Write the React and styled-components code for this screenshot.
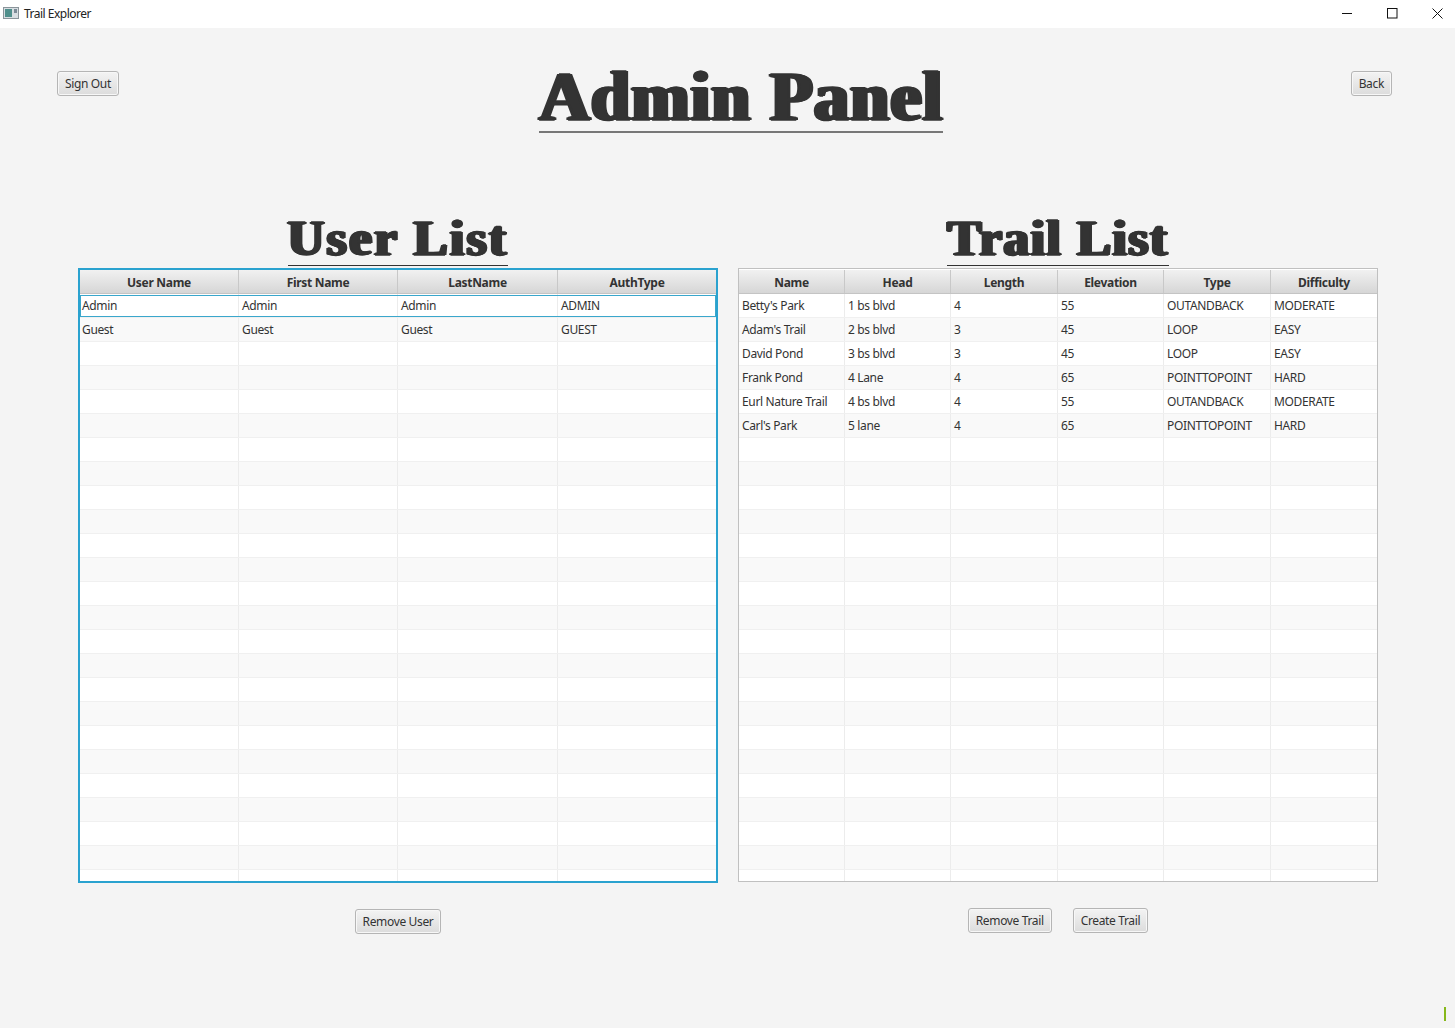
import React from "react";
import styled, { createGlobalStyle } from "styled-components";

const GlobalStyle = createGlobalStyle`
  html, body {
    margin: 0;
    padding: 0;
    background: #f4f4f4;
  }
  * {
    box-sizing: border-box;
  }
`;

const Window = styled.div`
  width: 1455px;
  height: 1028px;
  position: relative;
  overflow: hidden;
  background: #f4f4f4;
  font-family: "Noto Sans", "Open Sans", sans-serif;
  font-size: 12px;
  color: #333;
`;

const TitleBar = styled.div`
  height: 28px;
  background: #fff;
  display: flex;
  align-items: center;
  padding-left: 3px;
  color: #222;
`;

const AppName = styled.span`
  margin: -2px 0 0 5px;
  font-size: 12px;
  letter-spacing: -0.5px;
`;

const WindowButtons = styled.div`
  margin: -2px -5px 0 auto;
  display: flex;
`;

const WindowButton = styled.div`
  width: 45px;
  height: 28px;
  display: flex;
  align-items: center;
  justify-content: center;
`;

const Header = styled.div`
  display: flex;
  justify-content: space-between;
  align-items: flex-start;
  padding: 43px 63px 0 57px;
  height: 130px;
`;

const Button = styled.button`
  height: 25px;
  padding: 0 7px;
  border: 1px solid #b5b5b5;
  border-radius: 3px;
  background: linear-gradient(#f3f3f3, #dcdcdc);
  box-shadow: inset 0 0 0 1px #f7f7f7;
  font: inherit;
  font-size: 12px;
  letter-spacing: -0.35px;
  color: #333;
`;

const PageTitle = styled.h1`
  margin: -7px 0 0 13px;
  height: 69px;
  font-family: "Liberation Serif", serif;
  font-weight: 700;
  font-size: 70px;
  line-height: 66px;
  letter-spacing: 1.2px;
  color: #333;
  -webkit-text-stroke: 1.6px #333;
  text-shadow: 2.5px 0 0 #333, -2.5px 0 0 #333, 1.2px 0 0 #333, -1.2px 0 0 #333;
  border-bottom: 2px solid #777;
  white-space: nowrap;
`;

const Lists = styled.div`
  display: grid;
  grid-template-columns: 640px 640px;
  column-gap: 20px;
  padding: 54px 0 0 78px;
  align-items: start;
`;

const ListPanel = styled.section`
  display: flex;
  flex-direction: column;
  align-items: center;
`;

const ListTitle = styled.h2`
  margin: 0 0 2px;
  height: 54px;
  font-family: "Liberation Serif", serif;
  font-weight: 700;
  font-size: 51px;
  line-height: 53px;
  letter-spacing: ${(p) => p.$spacing}px;
  color: #333;
  -webkit-text-stroke: 1.3px #333;
  text-shadow: 2px 0 0 #333, -2px 0 0 #333, 1px 0 0 #333, -1px 0 0 #333;
  border-bottom: 1px solid #333;
  white-space: nowrap;
`;

const TableBox = styled.div`
  width: 640px;
  height: ${(p) => (p.$focused ? 615 : 614)}px;
  overflow: hidden;
  background: #fff;
  border: ${(p) => (p.$focused ? "2px solid #2aa2cf" : "1px solid #c0c0c0")};
  padding-top: ${(p) => (p.$focused ? 0 : 1)}px;
`;

const HeaderRow = styled.div`
  display: grid;
  grid-template-columns: ${(p) => p.$columns};
  height: 24px;
  background: linear-gradient(#f1f1f1, #d6d6d6);
  border-bottom: 1px solid #c4c4c4;
`;

const HeaderCell = styled.div`
  display: flex;
  align-items: center;
  justify-content: center;
  padding-top: 2px;
  font-weight: 700;
  letter-spacing: -0.3px;
  color: #333;
  border-right: 1px solid #c8c8c8;
  &:last-child {
    border-right: 0;
  }
`;

const Row = styled.div`
  display: grid;
  grid-template-columns: ${(p) => p.$columns};
  height: 24px;
  position: relative;
  background: ${(p) => (p.$odd ? "#f9f9f9" : "#fff")};
  border-bottom: 1px solid #f0f0f0;
`;

const Selection = styled.div`
  position: absolute;
  inset: 1px 0 0 0;
  border: 1px solid #3aa7cc;
  pointer-events: none;
`;

const Cell = styled.div`
  display: flex;
  align-items: center;
  padding-left: ${(p) => (p.$tight ? 2 : 3)}px;
  letter-spacing: -0.35px;
  color: #333;
  white-space: nowrap;
  border-right: 1px solid #ececec;
  &:last-child {
    border-right: 0;
  }
`;

const Actions = styled.div`
  display: flex;
  gap: 21px;
  margin-top: 26px;
`;

const StatusMark = styled.div`
  position: absolute;
  left: 1444px;
  top: 1007px;
  width: 2px;
  height: 14px;
  background: #86b81a;
`;

const userColumns = "159px 159px 160px 1fr";
const trailColumns = "106px 106px 107px 106px 107px 1fr";
const rowCount = 26;

const users = [
  ["Admin", "Admin", "Admin", "ADMIN"],
  ["Guest", "Guest", "Guest", "GUEST"],
];

const trails = [
  ["Betty's Park", "1 bs blvd", "4", "55", "OUTANDBACK", "MODERATE"],
  ["Adam's Trail", "2 bs blvd", "3", "45", "LOOP", "EASY"],
  ["David Pond", "3 bs blvd", "3", "45", "LOOP", "EASY"],
  ["Frank Pond", "4 Lane", "4", "65", "POINTTOPOINT", "HARD"],
  ["Eurl Nature Trail", "4 bs blvd", "4", "55", "OUTANDBACK", "MODERATE"],
  ["Carl's Park", "5 lane", "4", "65", "POINTTOPOINT", "HARD"],
];

const DataTable = ({ headers, rows, columns, focused }) => (
  <TableBox $focused={focused}>
    <HeaderRow $columns={columns}>
      {headers.map((h) => (
        <HeaderCell key={h}>{h}</HeaderCell>
      ))}
    </HeaderRow>
    {Array.from({ length: rowCount }).map((_, i) => (
      <Row key={i} $columns={columns} $odd={i % 2 === 1}>
        {headers.map((h, j) => (
          <Cell key={h} $tight={focused && j === 0}>
            {rows[i] ? rows[i][j] : ""}
          </Cell>
        ))}
        {focused && i === 0 && <Selection />}
      </Row>
    ))}
  </TableBox>
);

const AppIcon = () => (
  <svg width="16" height="14" viewBox="0 0 16 14" style={{ marginTop: -2 }}>
    <rect x="0.5" y="1.5" width="15" height="11" fill="#d8dee2" stroke="#8a949a" />
    <rect x="2" y="3" width="7" height="8" fill="#4f8f8c" />
    <rect x="11" y="3" width="3" height="4" fill="#7c8a96" />
  </svg>
);

export default function App() {
  return (
    <Window>
      <GlobalStyle />
      <TitleBar>
        <AppIcon />
        <AppName>Trail Explorer</AppName>
        <WindowButtons>
          <WindowButton>
            <svg width="11" height="11" viewBox="0 0 11 11">
              <path d="M0 5.5H10" stroke="#111" fill="none" />
            </svg>
          </WindowButton>
          <WindowButton>
            <svg width="11" height="11" viewBox="0 0 11 11">
              <rect x="0.5" y="0.5" width="9.5" height="9.5" stroke="#111" fill="none" />
            </svg>
          </WindowButton>
          <WindowButton>
            <svg width="11" height="11" viewBox="0 0 11 11">
              <path d="M0.5 0.5L10.5 10.5M10.5 0.5L0.5 10.5" stroke="#111" fill="none" />
            </svg>
          </WindowButton>
        </WindowButtons>
      </TitleBar>
      <Header>
        <Button>Sign Out</Button>
        <PageTitle>Admin Panel</PageTitle>
        <Button>Back</Button>
      </Header>
      <Lists>
        <ListPanel>
          <ListTitle $spacing={2.45}>User List</ListTitle>
          <DataTable
            focused
            headers={["User Name", "First Name", "LastName", "AuthType"]}
            rows={users}
            columns={userColumns}
          />
          <Actions>
            <Button>Remove User</Button>
          </Actions>
        </ListPanel>
        <ListPanel>
          <ListTitle $spacing={1.7}>Trail List</ListTitle>
          <DataTable
            headers={["Name", "Head", "Length", "Elevation", "Type", "Difficulty"]}
            rows={trails}
            columns={trailColumns}
          />
          <Actions>
            <Button>Remove Trail</Button>
            <Button>Create Trail</Button>
          </Actions>
        </ListPanel>
      </Lists>
      <StatusMark />
    </Window>
  );
}
